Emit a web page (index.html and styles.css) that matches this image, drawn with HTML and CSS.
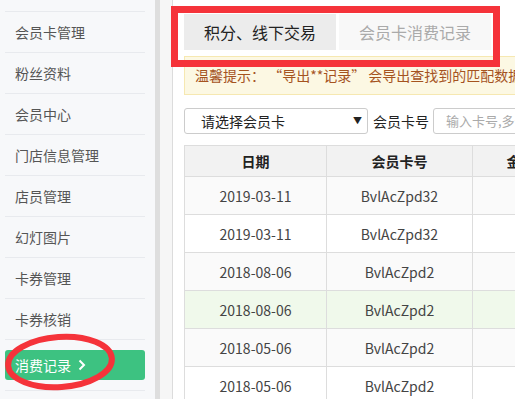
FILE: index.html
```html
<!DOCTYPE html>
<html lang="zh-CN">
<head>
  <meta charset="UTF-8">
  <title>消费记录</title>
  <link rel="stylesheet" href="styles.css">
</head>
<body>
  <aside class="sidebar">
    <ul class="menu">
      <li><a href="#">会员卡管理</a></li>
      <li><a href="#">粉丝资料</a></li>
      <li><a href="#">会员中心</a></li>
      <li><a href="#">门店信息管理</a></li>
      <li><a href="#">店员管理</a></li>
      <li><a href="#">幻灯图片</a></li>
      <li><a href="#">卡券管理</a></li>
      <li><a href="#">卡券核销</a></li>
      <li class="active"><a href="#">消费记录<svg class="chev" width="8" height="12" viewBox="0 0 8 12"><path d="M1.5 1.5 L6 6 L1.5 10.5" fill="none" stroke="#fff" stroke-width="2"/></svg></a></li>
      <li><a href="#">&nbsp;</a></li>
    </ul>
  </aside>
  <div class="scroll-strip"></div>
  <div class="gutter"></div>
  <main class="panel">
    <div class="tabs">
      <div class="tab current">积分、线下交易</div>
      <div class="tab">会员卡消费记录</div>
    </div>
    <div class="notice">温馨提示： “导出**记录” 会导出查找到的匹配数据，不选择会员卡则导出全部记录</div>
    <div class="filter">
      <div class="select">请选择会员卡<span class="arrow">▼</span></div>
      <label class="label">会员卡号</label>
      <div class="input">输入卡号,多个用逗号隔开</div>
    </div>
    <table class="records">
      <thead>
        <tr><th class="c1">日期</th><th class="c2">会员卡号</th><th class="c3">金额</th></tr>
      </thead>
      <tbody>
        <tr><td>2019-03-11</td><td>BvlAcZpd32</td><td></td></tr>
        <tr><td>2019-03-11</td><td>BvlAcZpd32</td><td></td></tr>
        <tr><td>2018-08-06</td><td>BvlAcZpd2</td><td></td></tr>
        <tr class="hover"><td>2018-08-06</td><td>BvlAcZpd2</td><td></td></tr>
        <tr><td>2018-05-06</td><td>BvlAcZpd2</td><td></td></tr>
        <tr><td>2018-05-06</td><td>BvlAcZpd2</td><td></td></tr>
      </tbody>
    </table>
  </main>

  <!-- annotation marks -->
  <div class="mark-box"></div>
  <svg class="mark-ring" width="120" height="64" viewBox="0 0 120 64">
    <ellipse cx="58" cy="31" rx="52" ry="25" fill="none" stroke="#f5333a" stroke-width="6" transform="rotate(-4 58 31)"/>
  </svg>
</body>
</html>
```

FILE: styles.css
```css
* {
  box-sizing: border-box;
}

html, body {
  margin: 0;
  padding: 0;
  height: 100%;
}

body {
  display: flex;
  width: 515px;
  height: 399px;
  overflow: hidden;
  font-family: "Noto Sans CJK SC", "Noto Sans", sans-serif;
  font-size: 14px;
  color: #333;
  position: relative;
}

.sidebar {
  width: 155px;
  flex: none;
  background: #f7f8fa;
  padding: 11px 10px 0 5px;
  overflow: hidden;
}

.menu {
  list-style: none;
  margin: 0;
  padding: 0;
}

.menu li {
  border-top: 1px solid #e8eaee;
}

.menu a {
  display: block;
  height: 40px;
  line-height: 40px;
  padding-left: 10px;
  color: #555;
  text-decoration: none;
}

.menu li.active {
  padding: 10px 0;
}

.menu li.active a {
  display: flex;
  align-items: center;
  height: 30px;
  line-height: 30px;
  background: #3dc281;
  color: #fff;
  border-radius: 3px;
}

.chev {
  margin-left: 7px;
}

.scroll-strip {
  width: 5px;
  flex: none;
  background: #dedede;
}

.gutter {
  width: 13px;
  flex: none;
  background: #f6f6f6;
  border-right: 1px solid #dcdcdc;
}

.panel {
  flex: 1;
  min-width: 0;
  background: #fff;
  padding: 14px 0 0 11px;
  overflow: hidden;
}

.tabs {
  display: flex;
  gap: 3px;
}

.tab {
  width: 152px;
  height: 36px;
  line-height: 36px;
  text-align: center;
  font-size: 16px;
  color: #aaa;
  background: #f8f8f8;
}

.tab.current {
  background: #ececec;
  color: #222;
}

.notice {
  margin-top: 6px;
  width: 400px;
  height: 39px;
  line-height: 37px;
  padding-left: 10px;
  background: #fcf8e3;
  border: 1px solid #f6e8b1;
  color: #a5531f;
  white-space: nowrap;
  overflow: hidden;
}

.filter {
  display: flex;
  align-items: center;
  margin-top: 13px;
  height: 26px;
}

.select {
  width: 184px;
  height: 26px;
  line-height: 24px;
  border: 1px solid #ccc;
  border-radius: 3px;
  padding-left: 16px;
  color: #222;
  position: relative;
  flex: none;
}

.arrow {
  position: absolute;
  right: 5px;
  top: 0;
  font-size: 9px;
  color: #222;
}

.label {
  margin-left: 5px;
  width: 56px;
  flex: none;
  font-size: 14px;
  color: #222;
}

.input {
  margin-left: 4px;
  width: 180px;
  flex: none;
  height: 26px;
  line-height: 24px;
  border: 1px solid #ccc;
  border-radius: 3px;
  padding-left: 12px;
  color: #aaa;
  font-size: 13px;
  white-space: nowrap;
  overflow: hidden;
}

.records {
  margin-top: 11px;
  border-collapse: collapse;
  table-layout: fixed;
  width: 384px;
}

.records th,
.records td {
  border: 1px solid #ddd;
  text-align: center;
  font-size: 14px;
}

.records th {
  height: 31px;
  background: #f2f2f2;
  color: #222;
  font-weight: bold;
}

.records td {
  height: 38px;
  color: #444;
}

.c1 { width: 142px; }
.c2 { width: 146px; }
.c3 { width: 96px; }

.records tbody tr:nth-child(odd) td {
  background: #fafafa;
}

.records tbody tr.hover td {
  background: #f0f9eb;
}

.mark-box {
  position: absolute;
  left: 171px;
  top: 6px;
  width: 329px;
  height: 61px;
  border: 7px solid #f5333a;
}

.mark-ring {
  position: absolute;
  left: 2px;
  top: 331px;
}
```
